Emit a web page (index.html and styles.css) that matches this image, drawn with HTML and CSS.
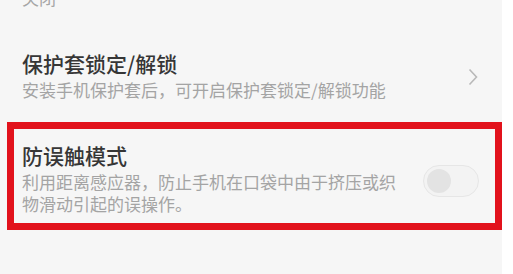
FILE: index.html
```html
<!DOCTYPE html>
<html lang="zh-CN">

<head>
    <meta charset="UTF-8">
    <meta name="viewport" content="width=device-width, initial-scale=1.0">
    <title>防误触模式</title>
    <link rel="stylesheet" href="styles.css">
</head>

<body>
    <div class="screen">
        <div class="prev-value">关闭</div>

        <div class="setting-row">
            <div class="setting-text">
                <div class="setting-title">保护套锁定/解锁</div>
                <div class="setting-desc">安装手机保护套后，可开启保护套锁定/解锁功能</div>
            </div>
            <svg class="chevron" width="10" height="18" viewBox="0 0 10 18">
                <path d="M1.5 1.5 L8.5 9 L1.5 16.5" fill="none" stroke="#b9b9b9" stroke-width="1.6" />
            </svg>
        </div>

        <div class="highlight">
            <div class="setting-row toggle-row">
                <div class="setting-text">
                    <div class="setting-title">防误触模式</div>
                    <div class="setting-desc">利用距离感应器，防止手机在口袋中由于挤压或织<br>物滑动引起的误操作。</div>
                </div>
                <div class="switch">
                    <div class="knob"></div>
                </div>
            </div>
        </div>
    </div>
</body>

</html>
```

FILE: styles.css
```css
body {
    margin: 0;
    background-color: #ffffff;
    font-family: "Noto Sans CJK SC", "Noto Sans", sans-serif;
    overflow: hidden;
}

.screen {
    width: 502px;
    height: 274px;
    background-color: #f6f6f6;
    overflow: hidden;
}

.prev-value {
    margin-top: -12px;
    padding-left: 22px;
    font-size: 17px;
    line-height: 20px;
    color: #a6a6a6;
}

.setting-row {
    display: flex;
    align-items: center;
    padding: 41px 24px 0 22px;
}

.setting-text {
    flex: 1;
}

.setting-title {
    font-size: 21px;
    line-height: 29px;
    font-weight: 500;
    color: #363636;
}

.setting-desc {
    margin-top: 1px;
    font-size: 17px;
    line-height: 22px;
    color: #a4a4a4;
}

.chevron {
    margin-top: 4px;
}

.highlight {
    margin: 21px 0 0 7px;
    height: 94px;
    border: 7px solid #e2121c;
}

.toggle-row {
    padding: 12px 16px 0 8px;
}

.switch {
    width: 56px;
    height: 32px;
    border: 1px solid #e6e6e6;
    border-radius: 17px;
    background-color: #f3f3f3;
    display: flex;
    align-items: center;
    padding-left: 3px;
    box-sizing: border-box;
    margin-top: 6px;
}

.knob {
    width: 24px;
    height: 24px;
    border-radius: 50%;
    background-color: #e3e3e3;
}
```
